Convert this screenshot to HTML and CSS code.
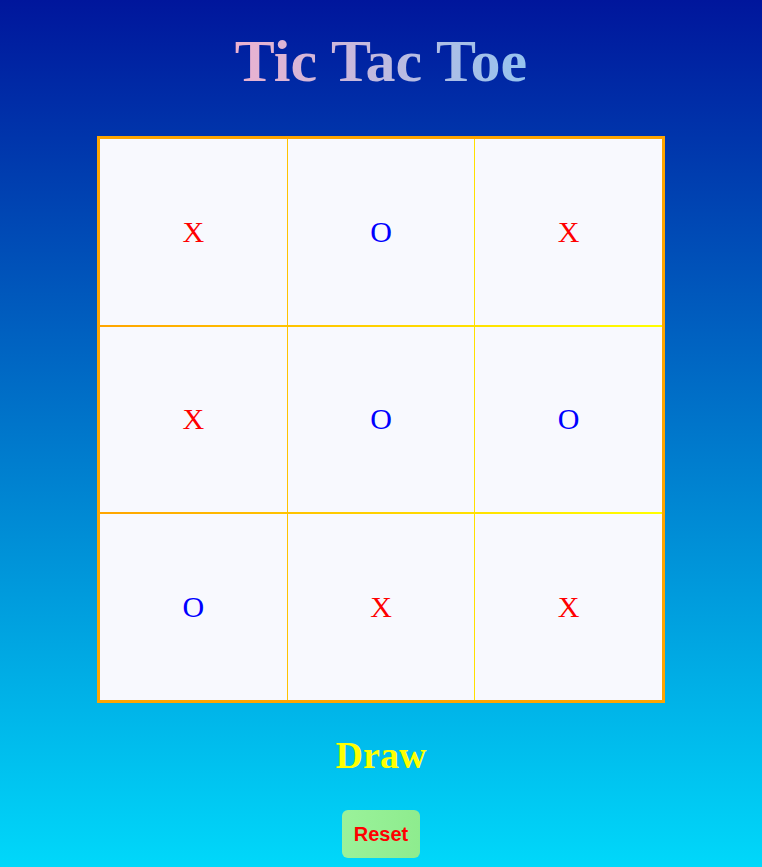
FILE: index.html
```html
<!DOCTYPE html>
<html lang="en">
<head>
<meta charset="utf-8">
<title>Tic Tac Toe</title>
<link rel="stylesheet" href="styles.css">
</head>
<body>
<main class="app">
  <h1 class="title">Tic Tac Toe</h1>
  <div class="board">
    <div class="cell x">X</div>
    <div class="cell o">O</div>
    <div class="cell x">X</div>
    <div class="cell x">X</div>
    <div class="cell o">O</div>
    <div class="cell o">O</div>
    <div class="cell o">O</div>
    <div class="cell x">X</div>
    <div class="cell x">X</div>
  </div>
  <div class="status">Draw</div>
  <button class="reset">Reset</button>
</main>
</body>
</html>
```
FILE: styles.css
```css
html, body {
  margin: 0;
  padding: 0;
  height: 100%;
}
body {
  background: linear-gradient(to bottom, #00169c, #00d8fa);
  font-family: "Liberation Serif", "Times New Roman", serif;
  overflow: hidden;
}
.app {
  display: flex;
  flex-direction: column;
  align-items: center;
  padding-top: 27px;
}
.title {
  margin: 0;
  font-size: 60px;
  font-weight: bold;
  line-height: normal;
  background: linear-gradient(to right, #ecb2d0, #94c3ef);
  -webkit-background-clip: text;
  background-clip: text;
  color: transparent;
}
.board {
  margin-top: 40px;
  width: 562px;
  height: 561px;
  border: 3px solid #ffa500;
  display: grid;
  grid-template-columns: repeat(3, 1fr);
  grid-template-rows: repeat(3, 1fr);
  column-gap: 1px;
  row-gap: 2px;
  background: linear-gradient(to right, #ffa500, #ffff00);
}
.cell {
  background: #f8f9fe;
  display: flex;
  align-items: center;
  justify-content: center;
  font-size: 30px;
}
.cell.x { color: #ff0000; }
.cell.o { color: #0000ff; }
.status {
  margin-top: 30px;
  font-size: 38px;
  font-weight: bold;
  color: #ffff00;
  line-height: normal;
}
.reset {
  margin-top: 33px;
  border: none;
  border-radius: 6px;
  padding: 12px 12px;
  background: linear-gradient(to right, #9af29a, #8eec8e);
  color: #ff0000;
  font-family: "Liberation Sans", Arial, sans-serif;
  font-weight: bold;
  font-size: 20px;
  line-height: 24px;
  cursor: pointer;
}
```
